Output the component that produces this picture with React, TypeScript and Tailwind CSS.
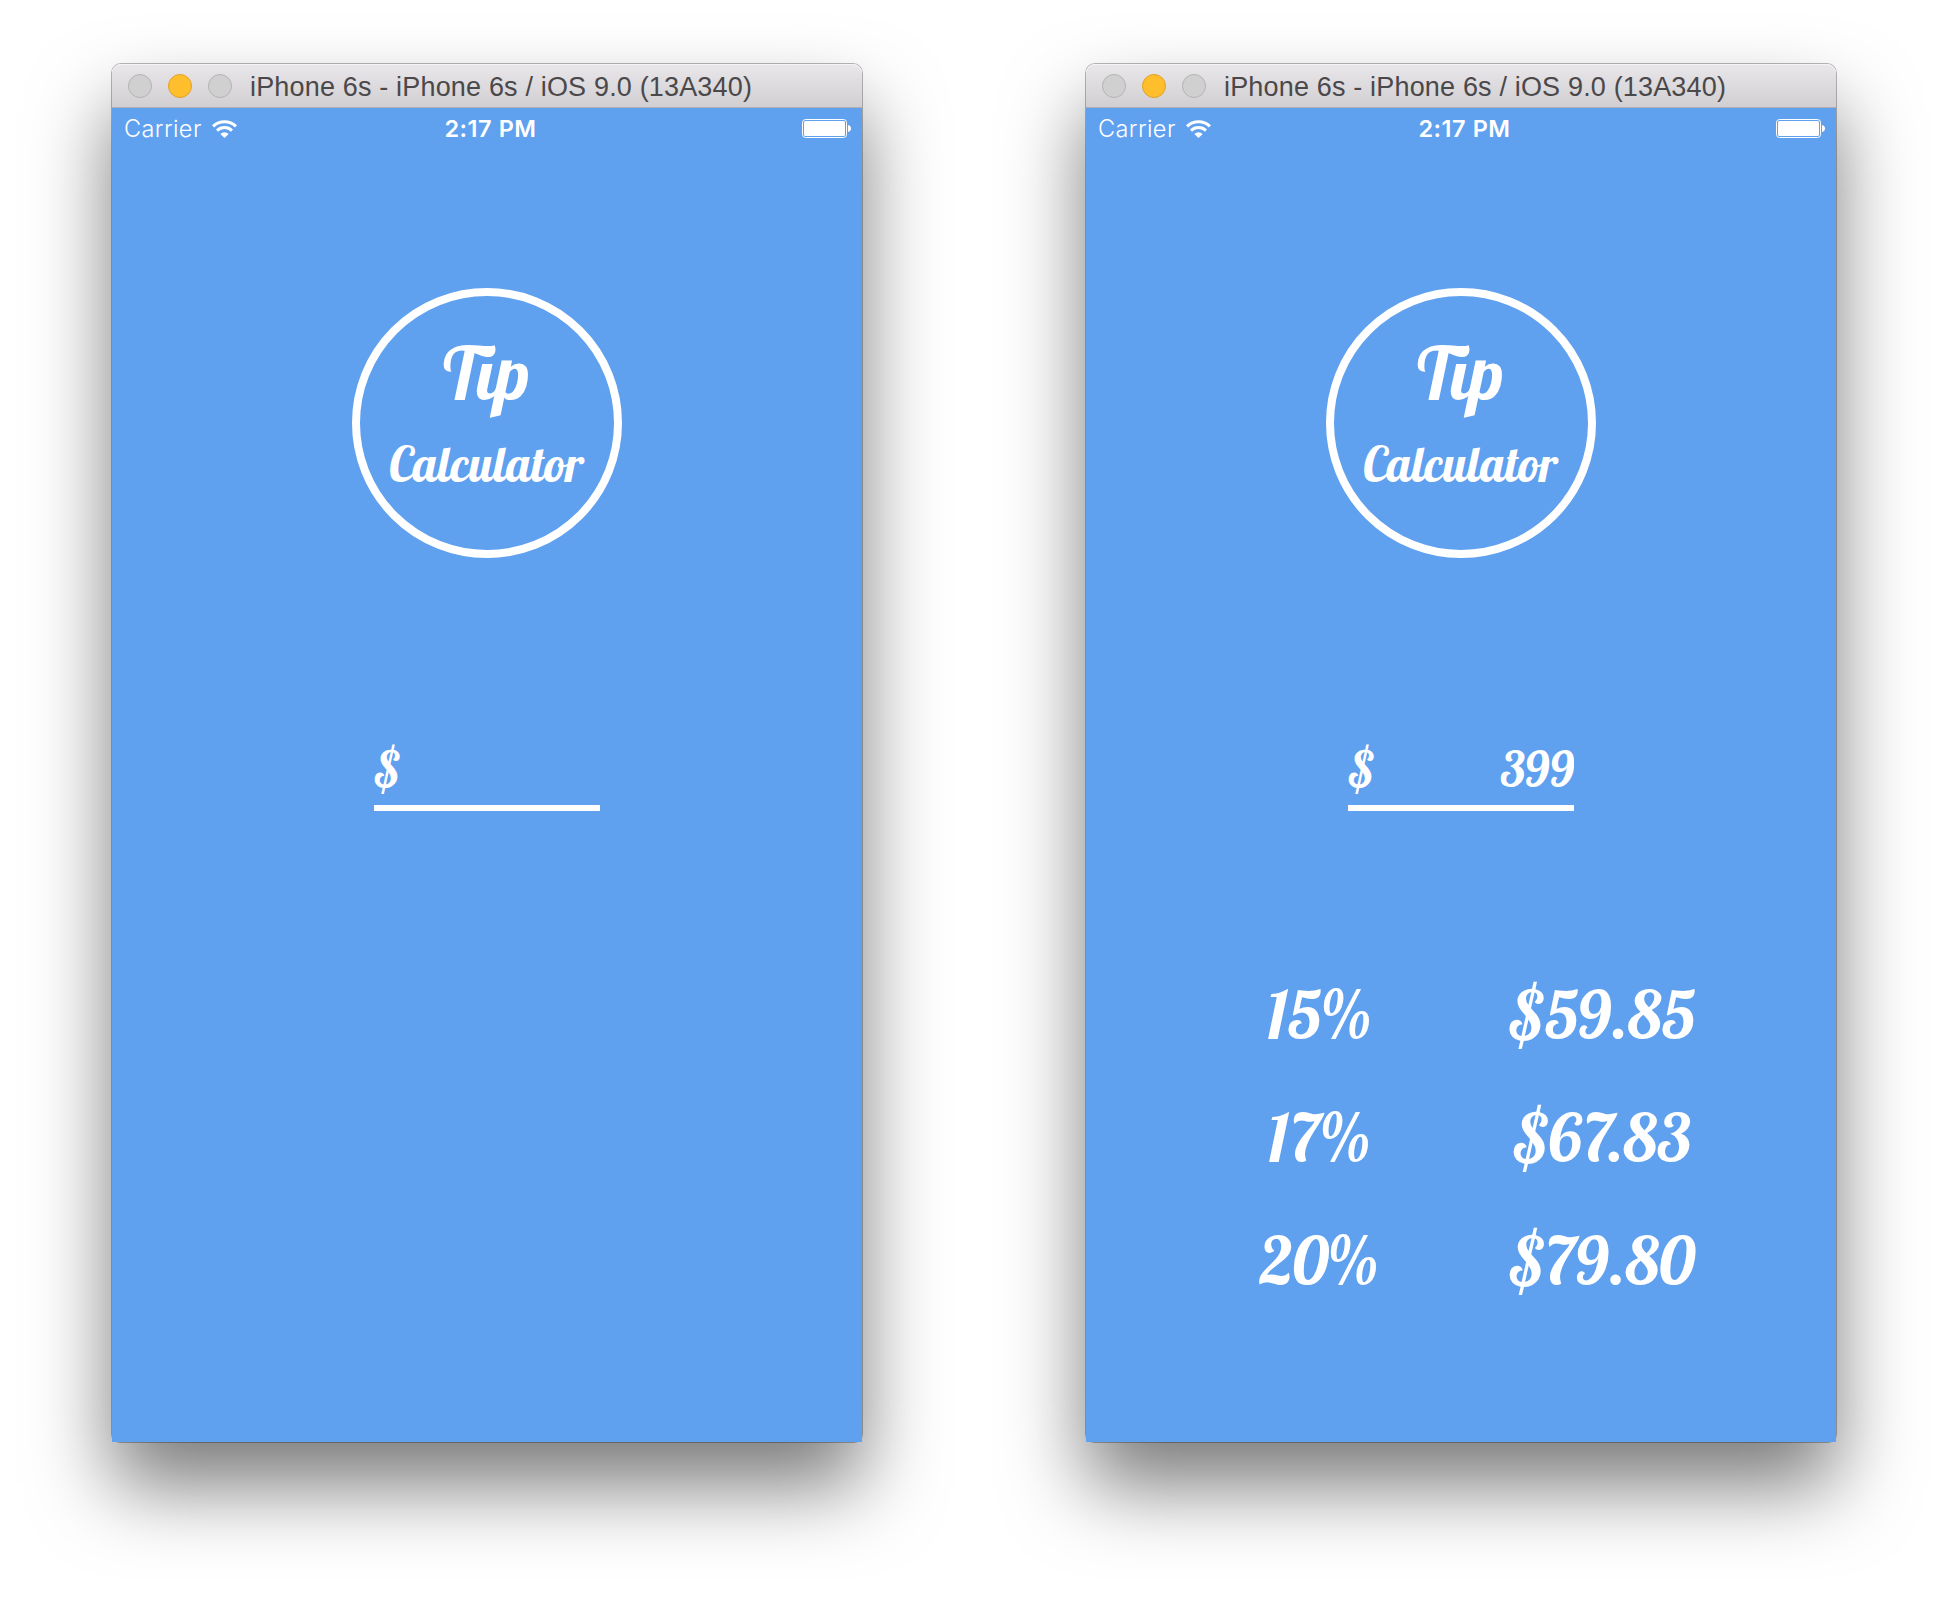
import React from "react";

type Tip = { percent: string; amount: string };

const tips: Tip[] = [
  { percent: "15", amount: "$59.85" },
  { percent: "17", amount: "$67.83" },
  { percent: "20", amount: "$79.80" },
];

const script = "font-['Lobster','Liberation_Serif',serif] whitespace-nowrap";

function WifiIcon() {
  return (
    <svg width="25" height="18" viewBox="0 0 25 18" fill="none" stroke="white">
      <path d="M1.100 6.300a16.400 16.400 0 0 1 22.800 0" strokeWidth="3.100" />
      <path d="M5 10.600a10.800 10.800 0 0 1 15 0" strokeWidth="2.900" />
      <path d="M8.300 14a6.200 6.200 0 0 1 8.400 0L12.500 18z" fill="white" stroke="none" />
    </svg>
  );
}

function BatteryIcon() {
  return (
    <svg width="49" height="19" viewBox="0 0 49 19">
      <rect x="0.5" y="0.5" width="44" height="18" rx="3" fill="none" stroke="white" />
      <rect x="2" y="2" width="41" height="15" rx="1.5" fill="white" />
      <path d="M46 6c2 .3 3 1.600 3 3.500s-1 3.200-3 3.500z" fill="white" />
    </svg>
  );
}

function TitleBar() {
  return (
    <div className="flex h-[44px] items-center rounded-t-[9px] border-b border-[#b3aeb0] bg-linear-to-b from-[#e9e7e9] to-[#d1cfd1] pl-4 shadow-[inset_0_1px_0_#f5f4f5]">
      <div className="flex gap-4">
        <span className="size-6 rounded-full border border-[#b4b4b4] bg-[#d0d0d0]" />
        <span className="size-6 rounded-full border border-[#e2a027] bg-[#ffbf2d]" />
        <span className="size-6 rounded-full border border-[#b4b4b4] bg-[#d0d0d0]" />
      </div>
      <span className="mt-[3px] ml-[18px] whitespace-nowrap font-['Liberation_Sans',sans-serif] text-[27px] leading-none tracking-[0.17px] text-[#4b484b]">
        iPhone 6s - iPhone 6s / iOS 9.0 (13A340)
      </span>
    </div>
  );
}

function StatusBar() {
  return (
    <div className="grid h-[41px] grid-cols-3 items-center pr-[11px] pl-3 font-['Inter',sans-serif] text-white">
      <div className="flex items-center gap-[10px]">
        <span className="text-[23.500px] leading-none font-[350] tracking-[0.4px]">Carrier</span>
        <WifiIcon />
      </div>
      <span className="pt-px pl-1.5 text-center text-[23.500px] leading-none font-semibold tracking-[0.55px] whitespace-nowrap">
        2:17 PM
      </span>
      <div className="flex justify-end">
        <BatteryIcon />
      </div>
    </div>
  );
}

function Simulator({ bill, showTips }: { bill?: string; showTips?: boolean }) {
  return (
    <div className="w-[750px] rounded-t-[9px] rounded-b-[8px] shadow-[0_0_0_1px_rgba(0,0,0,0.28),0_44px_80px_rgba(0,0,0,0.52)]">
      <TitleBar />
      <div className="flex h-[1334px] flex-col items-center bg-[#5fa0ef] text-white">
        <div className="w-full">
          <StatusBar />
        </div>
        <div className="mt-[139px] flex size-[270px] shrink-0 flex-col items-center rounded-full border-8 border-white pt-[37px]">
          <span className={`${script} pr-px text-[71.5px] leading-[80px]`}>Tip</span>
          <span className={`${script} mt-[21px] pr-px text-[48px] leading-[60px]`}>Calculator</span>
        </div>
        <div className={`${script} mt-[181px] flex h-[72px] w-[226px] shrink-0 justify-between border-b-6 border-white text-[48px] leading-[60px]`}>
          <span>$</span>
          <span className="overflow-hidden">{bill}</span>
        </div>
        {showTips && (
          <div className={`${script} mt-[142px] flex w-full flex-col text-[66px] leading-[123px]`}>
            {tips.map((tip) => (
              <div key={tip.percent} className="flex pl-[132px]">
                <div className="flex w-[200px] justify-center">
                  <span>{tip.percent}</span>
                  <span className="-ml-[5px] origin-right scale-x-[0.93]">%</span>
                </div>
                <div className="ml-[74px] flex w-[220px] justify-center">{tip.amount}</div>
              </div>
            ))}
          </div>
        )}
      </div>
    </div>
  );
}

export default function App() {
  return (
    <main className="flex h-[1602px] w-[1948px] items-start gap-56 overflow-hidden bg-white pt-16 pl-28">
      <Simulator />
      <Simulator bill="399" showTips />
    </main>
  );
}
